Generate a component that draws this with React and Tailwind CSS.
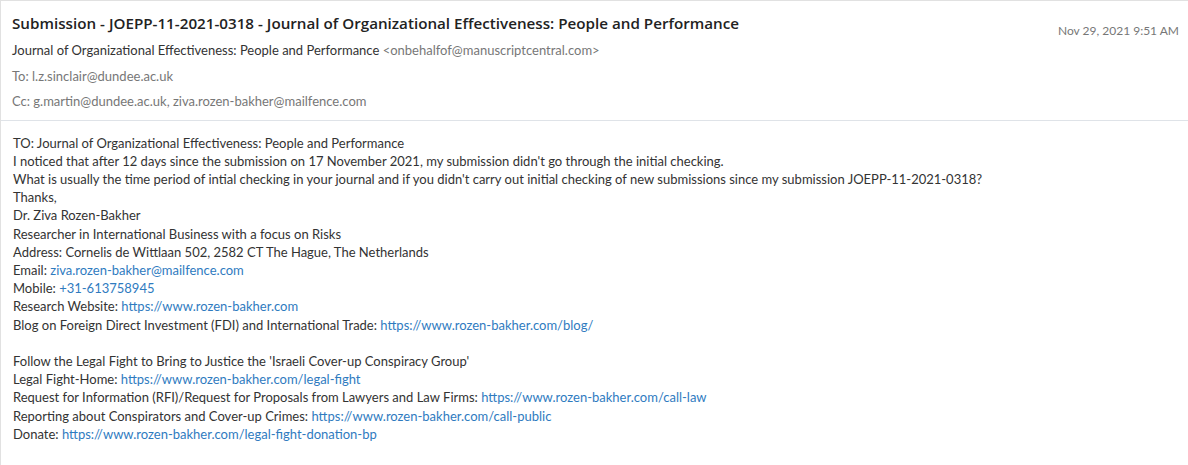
import React from "react";

const link = "text-[#2f7bbf]";

export default function App() {
  return (
    <div className="h-[465px] w-[1188px] bg-white font-['Lato',sans-serif] text-[#333]">
      <div className="h-full border-l border-t border-[#e1e1e1]">
        <div className="flex items-start justify-between pl-[11px] pr-[9px] pt-[12px] pb-[10px] border-b border-[#dfe3e8]">
          <div>
            <h1 className="font-['Open_Sans',sans-serif] text-[15.2px] font-semibold leading-[21px] text-[#222]">
              Submission - JOEPP-11-2021-0318 - Journal of Organizational Effectiveness: People and Performance
            </h1>
            <div className="mt-[7px] text-[13px] leading-[18px]">
              Journal of Organizational Effectiveness: People and Performance{" "}
              <span className="text-[#777]">&lt;onbehalfof@manuscriptcentral.com&gt;</span>
            </div>
            <div className="mt-[7.5px] text-[13px] leading-[18px] text-[#777]">To: l.z.sinclair@dundee.ac.uk</div>
            <div className="mt-[7px] text-[13px] leading-[18px] text-[#777]">
              Cc: g.martin@dundee.ac.uk, ziva.rozen-bakher@mailfence.com
            </div>
          </div>
          <div className="pt-[9px] text-[12px] leading-[18px] text-[#777]">Nov 29, 2021 9:51 AM</div>
        </div>
        <div className="px-[12px] pt-[13px] text-[13px] leading-[18.2px] text-[#333]">
          <div>TO: Journal of Organizational Effectiveness: People and Performance</div>
          <div>I noticed that after 12 days since the submission on 17 November 2021, my submission didn't go through the initial checking.</div>
          <div>What is usually the time period of intial checking in your journal and if you didn't carry out initial checking of new submissions since my submission JOEPP-11-2021-0318?</div>
          <div>Thanks,</div>
          <div>Dr. Ziva Rozen-Bakher</div>
          <div>Researcher in International Business with a focus on Risks</div>
          <div>Address: Cornelis de Wittlaan 502, 2582 CT The Hague, The Netherlands</div>
          <div>Email: <span className={link}>ziva.rozen-bakher@mailfence.com</span></div>
          <div>Mobile: <span className={link}>+31-613758945</span></div>
          <div>Research Website: <span className={link}>https://www.rozen-bakher.com</span></div>
          <div>Blog on Foreign Direct Investment (FDI) and International Trade: <span className={link}>https://www.rozen-bakher.com/blog/</span></div>
          <div className="h-[18.2px]" />
          <div>Follow the Legal Fight to Bring to Justice the 'Israeli Cover-up Conspiracy Group'</div>
          <div>Legal Fight-Home: <span className={link}>https://www.rozen-bakher.com/legal-fight</span></div>
          <div>Request for Information (RFI)/Request for Proposals from Lawyers and Law Firms: <span className={link}>https://www.rozen-bakher.com/call-law</span></div>
          <div>Reporting about Conspirators and Cover-up Crimes: <span className={link}>https://www.rozen-bakher.com/call-public</span></div>
          <div>Donate: <span className={link}>https://www.rozen-bakher.com/legal-fight-donation-bp</span></div>
        </div>
      </div>
    </div>
  );
}
